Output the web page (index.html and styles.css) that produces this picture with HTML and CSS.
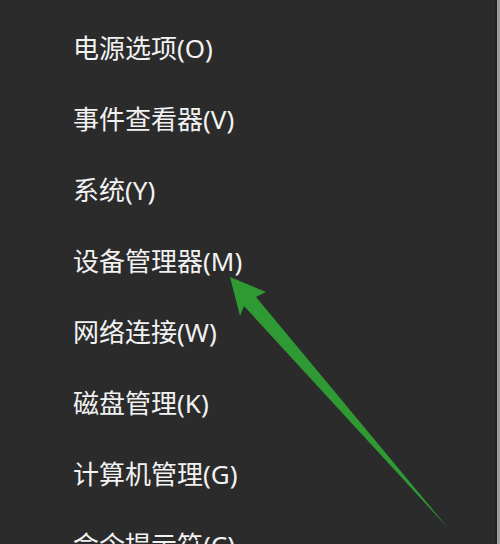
FILE: index.html
```html
<!DOCTYPE html>
<html lang="zh-CN">
  <head>
    <meta charset="utf-8">
    <title>快速链接菜单</title>
    <link rel="stylesheet" href="styles.css">
  </head>
  <body>

  <div id="screen">
    <ul class="menu">
      <li class="item">电源选项(O)</li>
      <li class="item">事件查看器(V)</li>
      <li class="item">系统(Y)</li>
      <li class="item">设备管理器(M)</li>
      <li class="item">网络连接(W)</li>
      <li class="item">磁盘管理(K)</li>
      <li class="item">计算机管理(G)</li>
      <li class="item">命令提示符(C)</li>
    </ul>
    <div class="edge"></div>

    <svg class="arrow" width="500" height="544" viewBox="0 0 500 544">
      <polygon points="230,277 266,292 256,297 448,528 244,306 240,316" fill="#2f9a33"/>
    </svg>
  </div>

  </body>
</html>
```

FILE: styles.css
```css
html {
  height: 100%;
}
body {
  margin: 0;
  padding: 0;
  background: #2b2b2b;
  color: #f2f2f2;
  font-family: "Noto Sans", "Noto Sans CJK SC", sans-serif;
  height: 100%;
  overflow: hidden;
}

#screen {
  position: relative;
  display: flex;
  width: 500px;
  height: 544px;
  overflow: hidden;
}

.menu {
  flex: 1;
  list-style: none;
  margin: 0;
  padding: 13px 0 0 73px;
}

.item {
  height: 71px;
  line-height: 71px;
  font-size: 26px;
  white-space: nowrap;
}

.edge {
  width: 3px;
  background: #9e9e9e;
  border-left: 2px solid #222;
}

.arrow {
  position: absolute;
  left: 0;
  top: 0;
}
```
